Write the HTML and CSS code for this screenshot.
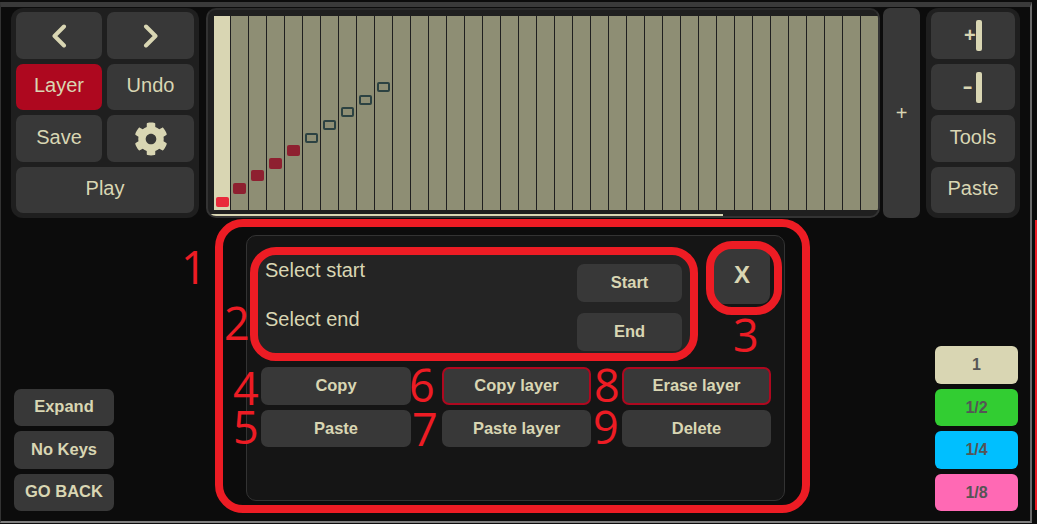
FILE: index.html
```html
<!DOCTYPE html>
<html lang="en">
<head>
<meta charset="UTF-8" />
<meta name="viewport" content="width=device-width, initial-scale=1" />
<title>Sequencer - Tools</title>
<link rel="stylesheet" href="styles.css">
</head>
<body>

<div class="frame"></div>
<div class="edge-red"></div>

<div class="editor">
  <section class="panel panel-left">
    <button class="btn">
      <svg class="arrow" viewBox="0 0 16 24"><path d="M13 2.500 L3.500 12 L13 21.500" /></svg>
    </button>
    <button class="btn">
      <svg class="arrow" viewBox="0 0 16 24"><path d="M3 2.500 L12.500 12 L3 21.500" /></svg>
    </button>
    <button class="btn btn-text btn-red">Layer</button>
    <button class="btn btn-text">Undo</button>
    <button class="btn btn-text">Save</button>
    <button class="btn">
      <svg class="gear" viewBox="0 0 512 512">
        <path d="M487.4 315.7l-42.6-24.6c4.3-23.2 4.3-47 0-70.2l42.6-24.6c4.9-2.8 7.1-8.6 5.5-14-11.1-35.6-30-67.8-54.7-94.6-3.8-4.1-10-5.1-14.8-2.3L380.8 110c-17.9-15.4-38.5-27.3-60.8-35.1V25.800c0-5.600-3.900-10.500-9.400-11.700-36.700-8.200-74.300-7.800-109.200 0-5.500 1.200-9.400 6.100-9.400 11.700V75c-22.200 7.900-42.800 19.800-60.800 35.100L88.700 85.500c-4.900-2.800-11-1.900-14.800 2.300-24.700 26.700-43.600 58.900-54.700 94.600-1.700 5.400.6 11.200 5.500 14L67.300 221c-4.300 23.200-4.300 47 0 70.200l-42.600 24.600c-4.900 2.800-7.100 8.600-5.500 14 11.100 35.600 30 67.800 54.700 94.600 3.800 4.100 10 5.100 14.800 2.300l42.600-24.600c17.900 15.400 38.500 27.300 60.800 35.100v49.200c0 5.600 3.900 10.500 9.400 11.700 36.700 8.200 74.300 7.800 109.200 0 5.500-1.200 9.400-6.100 9.400-11.700v-49.200c22.200-7.900 42.800-19.800 60.800-35.100l42.600 24.600c4.900 2.800 11 1.900 14.800-2.300 24.700-26.700 43.600-58.900 54.700-94.600 1.500-5.500-.7-11.300-5.600-14.100zM256 336c-44.100 0-80-35.900-80-80s35.900-80 80-80 80 35.900 80 80-35.900 80-80 80z" />
      </svg>
    </button>
    <button class="btn btn-text btn-wide">Play</button>
  </section>

  <section class="roll">
    <div class="grid" id="grid"></div>
    <div class="progress"></div>
  </section>

  <button class="btn btn-add">+</button>

  <section class="panel panel-right">
    <button class="btn"><span class="bar-label">+</span><span class="bar"></span></button>
    <button class="btn"><span class="bar-label bar-label-minus">-</span><span class="bar"></span></button>
    <button class="btn btn-text">Tools</button>
    <button class="btn btn-text">Paste</button>
  </section>
</div>

<div class="lower">
  <div class="side-left">
    <button class="btn btn-small">Expand</button>
    <button class="btn btn-small">No Keys</button>
    <button class="btn btn-small">GO BACK</button>
  </div>

  <div class="dialog">
    <div class="dialog-top">
      <div class="select-box">
        <div class="select-row">
          <span class="select-text">Select start</span>
          <button class="btn btn-bold btn-select">Start</button>
        </div>
        <div class="select-row">
          <span class="select-text">Select end</span>
          <button class="btn btn-bold btn-select">End</button>
        </div>
      </div>
      <button class="btn btn-bold btn-close">X</button>
    </div>
    <div class="actions">
      <button class="btn btn-bold">Copy</button>
      <button class="btn btn-bold btn-outline">Copy layer</button>
      <button class="btn btn-bold btn-outline">Erase layer</button>
      <button class="btn btn-bold btn-row2">Paste</button>
      <button class="btn btn-bold btn-row2">Paste layer</button>
      <button class="btn btn-bold btn-row2">Delete</button>
    </div>
  </div>

  <div class="side-right">
    <button class="btn-note note-1">1</button>
    <button class="btn-note note-2">1/2</button>
    <button class="btn-note note-4">1/4</button>
    <button class="btn-note note-8">1/8</button>
  </div>

  <!-- annotations drawn over the screenshot -->
  <div class="mark mark-outer"></div>
  <div class="mark mark-select"></div>
  <div class="mark mark-close"></div>
  <span class="num num-1">1</span>
  <span class="num num-2">2</span>
  <span class="num num-3">3</span>
  <span class="num num-4">4</span>
  <span class="num num-5">5</span>
  <span class="num num-6">6</span>
  <span class="num num-7">7</span>
  <span class="num num-8">8</span>
  <span class="num num-9">9</span>
</div>

<script>
  // columns of the roll, first one is the current step
  const grid = document.getElementById('grid');
  const filled = 5;
  const notes = 10;
  for (let i = 0; i < 37; i++) {
    const col = document.createElement('div');
    col.className = i === 0 ? 'col col-active' : 'col';
    if (i < notes) {
      const note = document.createElement('div');
      note.className = i === 0 ? 'note note-current' : i < filled ? 'note note-on' : 'note note-off';
      note.style.marginBottom = (3 + Math.round(i * 12.8)) + 'px';
      col.appendChild(note);
    }
    grid.appendChild(col);
  }
</script>

</body>
</html>
```

FILE: styles.css
```css
:root {
  --cream: #d9d6b3;
  --btn: #383838;
  --panel: #1f1f1f;
  --page: #0c0c0c;
  --red: #ed1c24;
  --dark-red: #ae081f;
}
* {
  box-sizing: border-box;
}
html, body {
  height: 100%;
}
body {
  margin: 0;
  position: relative;
  overflow: hidden;
  padding: 8px 0 0 11px;
  background: var(--page);
  font-family: 'Liberation Sans', Arial, sans-serif;
  color: var(--cream);
}

/* edges of the captured window */
.frame {
  position: absolute;
  top: 2px;
  left: 0;
  width: 1032px;
  height: 521px;
  border-top: 5px solid #3a3a3a;
  border-left: 1px solid #333;
  border-right: 2px solid #6a6a6a;
  border-bottom: 2px solid #808080;
  pointer-events: none;
}
.edge-red {
  position: absolute;
  top: 220px;
  right: 0;
  width: 2px;
  height: 290px;
  background: var(--red);
}

.btn {
  display: flex;
  align-items: center;
  justify-content: center;
  border: none;
  padding: 0;
  border-radius: 7px;
  background: var(--btn);
  color: var(--cream);
  font-family: inherit;
  font-size: 20px;
}
.btn-text {
  padding-bottom: 3px;
}
.btn-red {
  background: var(--dark-red);
}
.btn-bold {
  padding-bottom: 2px;
  font-weight: 700;
  font-size: 16.5px;
}
.btn-row2 {
  padding-bottom: 0;
}

/* top row */
.editor {
  display: flex;
  height: 210px;
}
.panel {
  display: grid;
  grid-template-rows: 47px 46px 47px 46px;
  gap: 5px;
  padding: 4px 5px;
  background: var(--panel);
  border-radius: 12px;
}
.panel-left {
  width: 188px;
  grid-template-columns: 86px 87px;
}
.panel-right {
  width: 94px;
  margin-left: 6px;
  grid-template-columns: 84px;
}
.btn-wide {
  grid-column: span 2;
}
.arrow {
  width: 16px;
  height: 24px;
  fill: none;
  stroke: var(--cream);
  stroke-width: 4;
  stroke-linecap: round;
  stroke-linejoin: round;
}
.gear {
  width: 34px;
  height: 34px;
  fill: var(--cream);
}
.roll {
  position: relative;
  width: 674px;
  margin-left: 7px;
  padding: 6px 0 6px 6px;
  background: var(--panel);
  border: 2px solid #333;
  border-top-color: #2b2b2b;
  border-radius: 10px;
  overflow: hidden;
}
.grid {
  display: flex;
  height: 194px;
}
.col {
  flex: 0 0 18px;
  display: flex;
  flex-direction: column;
  justify-content: flex-end;
  align-items: center;
  background: #8e8e74;
  border-right: 1px solid #1f1f1f;
}
.col-active {
  flex-basis: 17px;
  background: var(--cream);
}
.note {
  flex: none;
  width: 13px;
  height: 11px;
  border-radius: 2px;
}
.note-current {
  height: 10px;
  background: #e92b3c;
}
.note-on {
  background: #8e2030;
}
.note-off {
  height: 10px;
  border: 2px solid #2c4242;
}
.progress {
  position: absolute;
  left: 0;
  bottom: 0;
  width: 515px;
  height: 2px;
  background: var(--cream);
}
.btn-add {
  width: 37px;
  margin-left: 3px;
}
.bar-label {
  width: 11px;
  margin-right: 1px;
  font-weight: 700;
  text-align: center;
}
.bar-label-minus {
  margin: 0 3px 0 -2px;
  padding-bottom: 4px;
  font-size: 32px;
  font-weight: 400;
}
.bar {
  width: 6px;
  height: 31px;
  border-radius: 2px;
  background: var(--cream);
}

/* lower part */
.lower {
  display: flex;
  align-items: flex-start;
}
.side-left {
  display: grid;
  grid-template-rows: 37px 38px 37px;
  gap: 5px;
  width: 100px;
  margin: 171px 0 0 3px;
}
.btn-small {
  padding-bottom: 2px;
  font-size: 16.5px;
  font-weight: 700;
}
.dialog {
  width: 539px;
  height: 266px;
  margin: 17px 0 0 132px;
  padding: 12px 14px;
  background: #151515;
  border: 1px solid #333;
  border-radius: 10px;
}
.dialog-top {
  display: flex;
  align-items: flex-start;
  height: 119px;
}
.select-box {
  display: flex;
  flex-direction: column;
  gap: 11px;
  width: 436px;
  height: 104px;
  margin: 3px 0 0 -6px;
  padding: 13px 9px 0;
  background: #242424;
  border-radius: 14px;
}
.select-row {
  display: flex;
  justify-content: space-between;
  height: 38px;
}
.select-text {
  margin: -5px 0 0 1px;
  font-size: 20px;
}
.btn-select {
  width: 105px;
  height: 38px;
}
.btn-close {
  width: 56px;
  height: 55px;
  margin: 1px 0 0 23px;
  padding-bottom: 3px;
  font-size: 24px;
  border-radius: 9px;
}
.actions {
  display: grid;
  grid-template-columns: 150px 149px 149px;
  grid-template-rows: 38px 37px;
  gap: 5px 31px;
}
.btn-outline {
  border: 2px solid var(--dark-red);
}
.side-right {
  display: grid;
  grid-template-rows: 38px 37px 38px 37px;
  gap: 5px;
  width: 83px;
  margin: 128px 0 0 150px;
}
.btn-note {
  padding: 0;
  border: none;
  border-radius: 6px;
  font-family: inherit;
  font-size: 16px;
  font-weight: 700;
  color: #555;
}
.note-1 { background: var(--cream); }
.note-2 { background: #32cd32; }
.note-4 { background: #00bfff; }
.note-8 { background: #ff69b4; }

/* annotations */
.mark {
  position: absolute;
  border: 8px solid var(--red);
  pointer-events: none;
}
.mark-outer {
  left: 215px;
  top: 219px;
  width: 595px;
  height: 294px;
  border-radius: 28px;
}
.mark-select {
  left: 250px;
  top: 247px;
  width: 448px;
  height: 114px;
  border-radius: 26px;
}
.mark-close {
  left: 706px;
  top: 241px;
  width: 76px;
  height: 74px;
  border-radius: 26px;
}
.num {
  position: absolute;
  font-family: 'Open Sans', sans-serif;
  font-size: 45px;
  font-weight: 400;
  line-height: 34px;
  color: var(--red);
}
.num-1 { left: 181px; top: 250px; }
.num-2 { left: 224px; top: 306px; }
.num-3 { left: 733px; top: 318px; }
.num-4 { left: 233px; top: 371px; }
.num-5 { left: 233px; top: 410px; }
.num-6 { left: 409px; top: 368px; }
.num-7 { left: 412px; top: 412px; }
.num-8 { left: 594px; top: 368px; }
.num-9 { left: 593px; top: 410px; }
```
